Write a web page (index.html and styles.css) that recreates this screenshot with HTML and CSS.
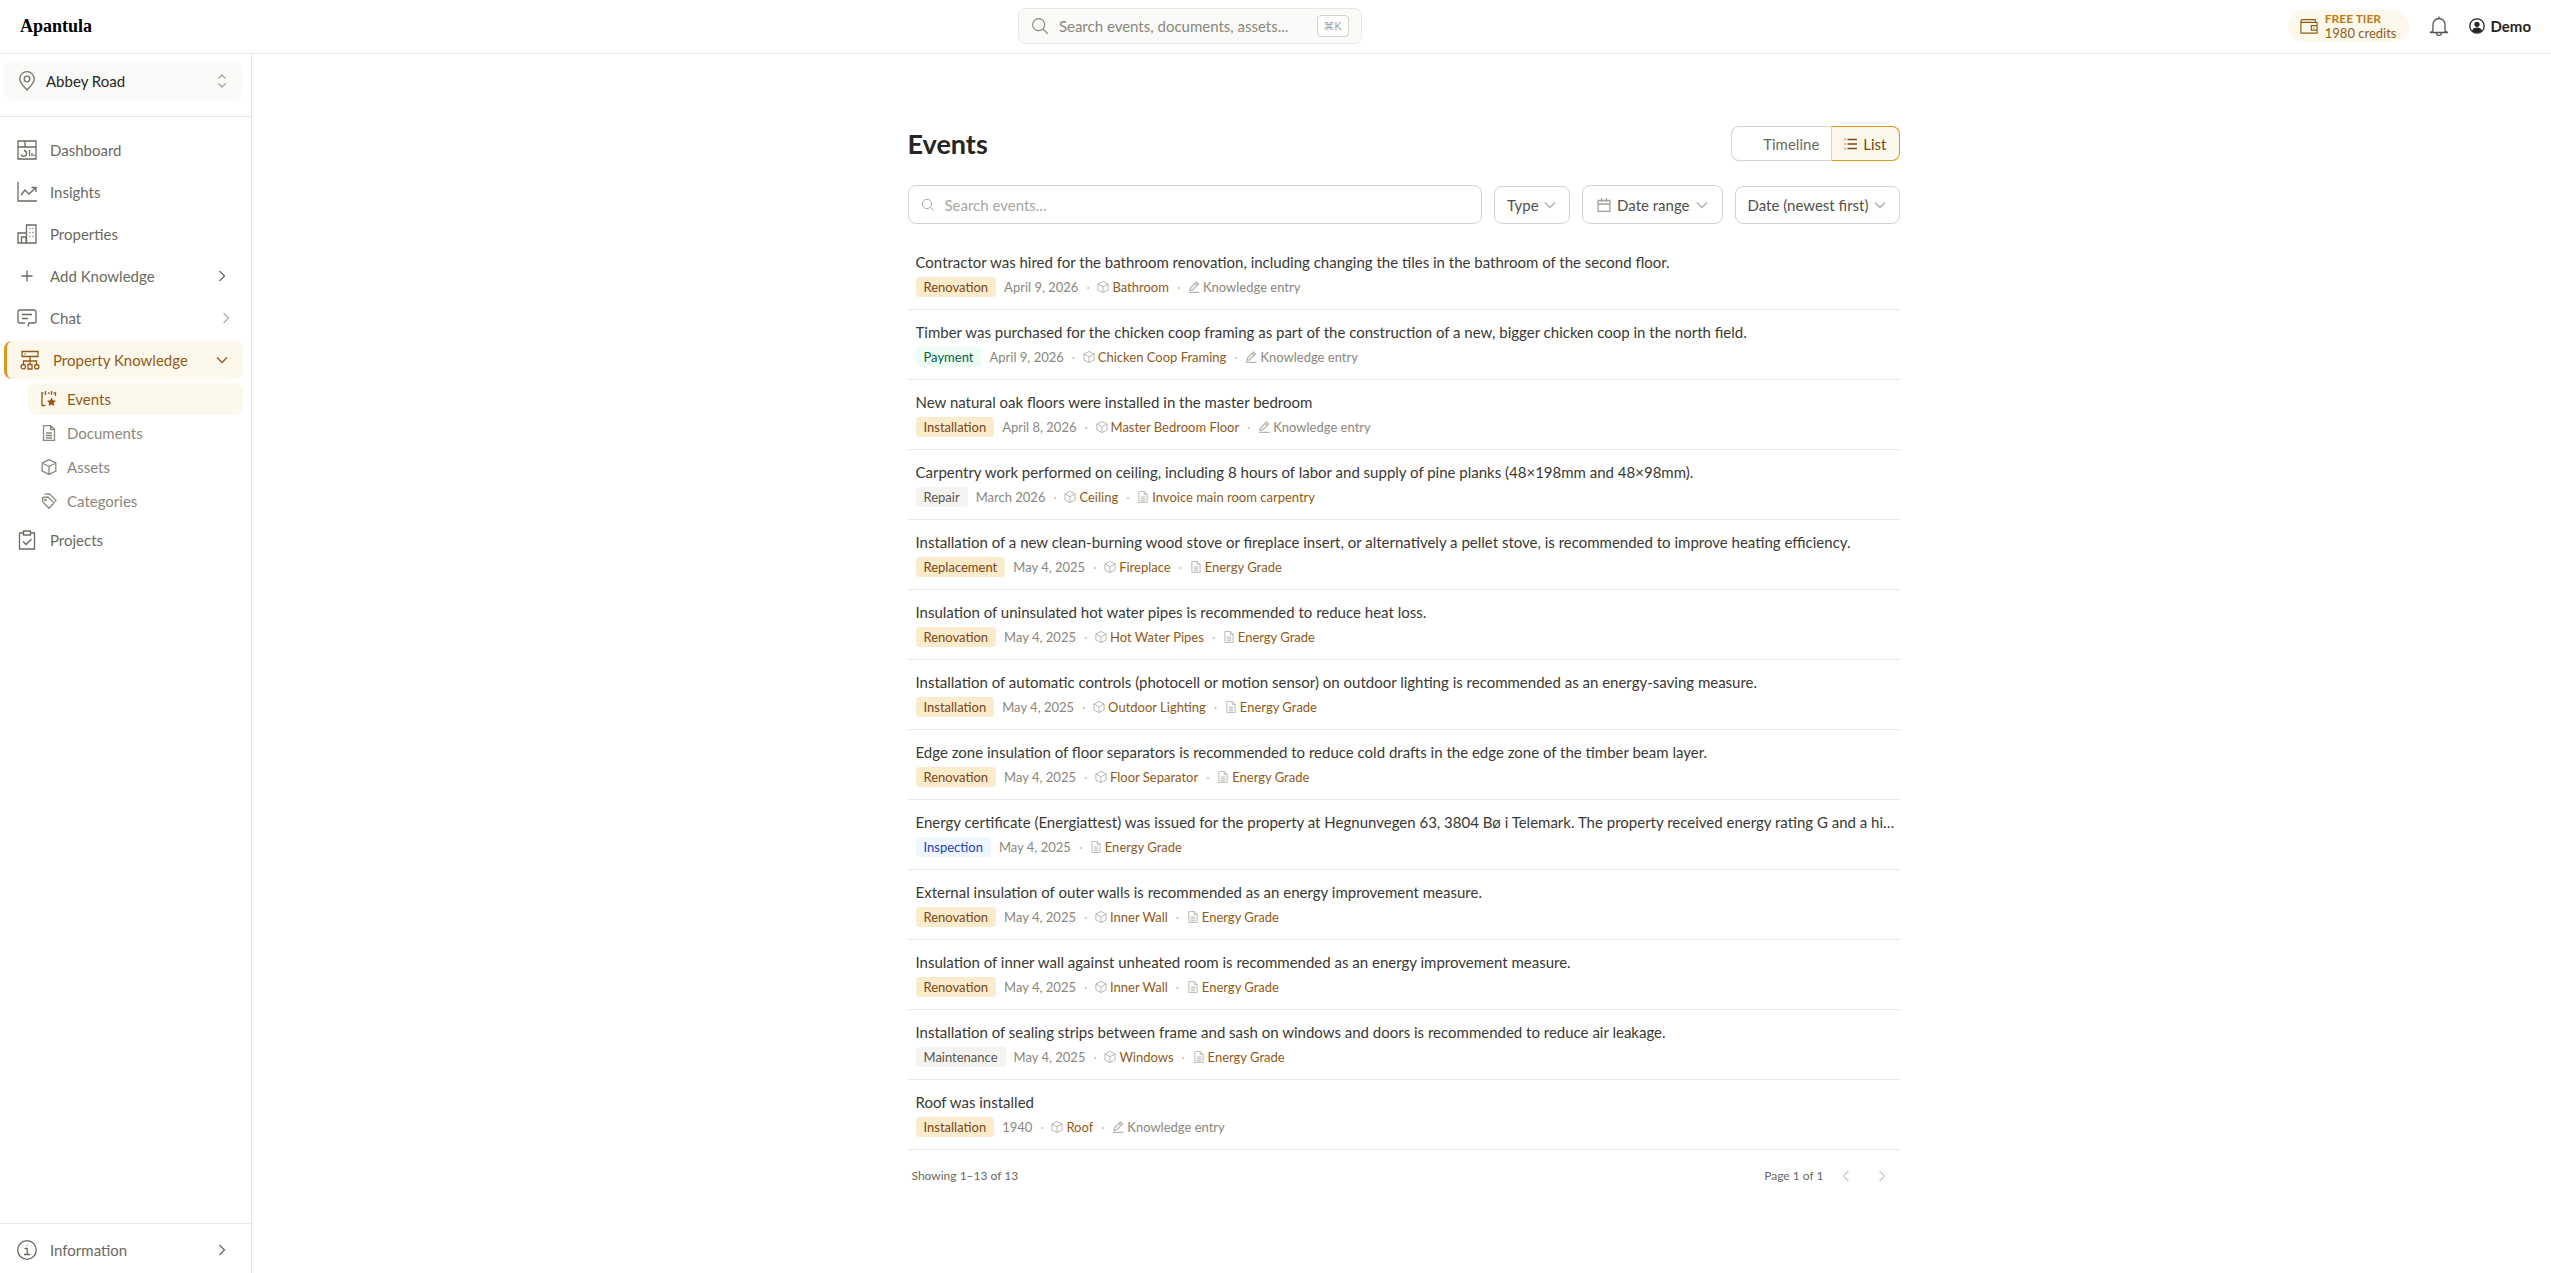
FILE: index.html
```html
<!DOCTYPE html>
<html lang="en">
<head>
  <meta charset="UTF-8">
  <title>Events - Apantula</title>
  <meta name="viewport" content="width=device-width, initial-scale=1.0">
  <link rel="stylesheet" href="styles.css">
</head>
<body>

  <!-- icon sprite -->
  <svg class="sprite" aria-hidden="true">
    <symbol id="i-search" viewBox="0 0 20 20"><circle cx="8.5" cy="8.5" r="6.7"/><path d="M13.3 13.3 18.6 18.6"/></symbol>
    <symbol id="i-pin" viewBox="0 0 20 20"><path d="M10 19C7 15.500 2.700 12 2.700 8a7.300 7.300 0 0 1 14.600 0c0 4-4.300 7.500-7.300 11z"/><circle cx="10" cy="8" r="2.800"/></symbol>
    <symbol id="i-updown" viewBox="0 0 12 16"><path d="M2.500 5.500 6 2l3.500 3.500M2.500 10.500 6 14l3.500-3.500"/></symbol>
    <symbol id="i-dashboard" viewBox="0 0 20 20"><path d="M1 1h18v18H1zM1 7h18M8 1v6M7 10.500a2.900 2.900 0 1 1-3 4M12.500 10v6M15 13v3M17 14.500V16"/></symbol>
    <symbol id="i-insights" viewBox="0 0 20 20"><path d="M1 0v19h19M4 13l4-5 4 4 7-6.500M14.500 5.500H19V10"/></symbol>
    <symbol id="i-buildings" viewBox="0 0 20 20"><path d="M9.500 19V1H19v18H1V9h8.500M4.500 19v-6H9v6M12.500 4.500h1M15.500 4.500h1M12.500 8.500h1M15.500 8.500h1M12.500 12.500h1M15.500 12.500h1"/></symbol>
    <symbol id="i-plus" viewBox="0 0 20 20"><path d="M10 4.500v11M4.500 10h11"/></symbol>
    <symbol id="i-chat" viewBox="0 0 20 20"><path d="M11 18.500 12 15h5a2 2 0 0 0 2-2V4a2 2 0 0 0-2-2H3a2 2 0 0 0-2 2v9a2 2 0 0 0 2 2h5M5 6.500h10M5 10.500h6"/></symbol>
    <symbol id="i-tree" viewBox="0 0 20 20"><path d="M2 1.500h16v5H2zM4.500 4h1M10 6.500v8M3.500 14.500V11h13v3.500M8 14.500h4v4.500H8z"/><circle cx="3.300" cy="16.700" r="2.200"/><circle cx="16.700" cy="16.700" r="2.200"/></symbol>
    <symbol id="i-event" viewBox="0 0 16 16"><path d="M4.500 0v4M10.500 0v4M7 2h1.500M2.500 2H1v12.500h3.500M12.500 2H14.500v3"/><path class="solid" d="m10.500 6.500 1.300 2.800 3.200.4-2.300 2.200.6 3.100-2.800-1.500L7.700 15l.6-3.100L6 9.700l3.200-.4z"/></symbol>
    <symbol id="i-doc" viewBox="0 0 16 16"><path d="M2.500.5h7l4 4v11h-11zM9.500.5v4h4M5 8h6M5 10.500h6M5 13h6"/></symbol>
    <symbol id="i-box" viewBox="0 0 16 16"><path d="M8 .6 14.800 4v8L8 15.400 1.200 12V4zM1.200 4 8 7.500 14.800 4M8 7.500v7.900"/></symbol>
    <symbol id="i-tags" viewBox="0 0 16 16"><path d="M1.500 4.500 7 4l6 6-5 5.300-6-6zM3.500 1.200 8.500.8l6.500 6.700-1 1.500"/><circle cx="4.500" cy="7" r=".7"/></symbol>
    <symbol id="i-clipboard" viewBox="0 0 20 20"><path d="M6.500 3H2.500v16h15V3h-4M6.500 1h7v4h-7zM6 11.500l3 3 5.500-5.500"/></symbol>
    <symbol id="i-info" viewBox="0 0 20 20"><circle cx="10" cy="10" r="9.300"/><path d="M7.500 8.500h2.700v6M7 14.500h6.200M9.500 5.300h1"/></symbol>
    <symbol id="i-wallet" viewBox="0 0 20 20"><path d="M17 6V3H2.500a1.200 1.200 0 0 0 0 3H19v12H1V4M19 9.500h-6.500v5H19zM14.800 12h1"/></symbol>
    <symbol id="i-bell" viewBox="0 0 20 20"><path d="M10 .5v2M4 15V8.500a6 6 0 0 1 12 0V15l3 1.500H1L4 15M7.500 17a2.500 2.500 0 0 0 5 0"/></symbol>
    <symbol id="i-user" viewBox="0 0 16 16"><circle cx="8" cy="8" r="7.200"/><circle class="solid" cx="8" cy="6.300" r="2.600"/><path class="solid" d="M3 13c.5-2.500 2.500-3.500 5-3.500s4.500 1 5 3.500a7 7 0 0 1-10 0z"/></symbol>
    <symbol id="i-list" viewBox="0 0 14 14"><path d="M3.500 2.500H13M3.500 7H13M3.500 11.500H13M.5 2.500h1M.5 7h1M.5 11.500h1"/></symbol>
    <symbol id="i-calendar" viewBox="0 0 14 14"><path d="M1 2.500h12v11H1zM1 6h12M4.500 0v4M9.500 0v4"/></symbol>
    <symbol id="i-pencil" viewBox="0 0 12 12"><path d="M1 11.500h10.500M2 9.500l.5-2.500L8.500 1l2 2-6 6zM7 2.500l2 2"/></symbol>
    <symbol id="i-right" viewBox="0 0 12 12"><path d="m3.500 1 5 5-5 5"/></symbol>
    <symbol id="i-left" viewBox="0 0 12 12"><path d="m8.500 1-5 5 5 5"/></symbol>
    <symbol id="i-down" viewBox="0 0 12 12"><path d="m1 3.500 5 5 5-5"/></symbol>
  </svg>

  <header class="topbar">
    <a class="brand" href="#">Apantula</a>
    <button class="global-search">
      <svg class="icon-md"><use href="#i-search"/></svg>
      <span>Search events, documents, assets...</span>
      <kbd>⌘K</kbd>
    </button>
    <div class="topbar-right">
      <a class="credits" href="#">
        <svg class="icon-md"><use href="#i-wallet"/></svg>
        <span><b>FREE TIER</b>1980 credits</span>
      </a>
      <button class="bell" aria-label="Notifications"><svg class="icon-lg"><use href="#i-bell"/></svg></button>
      <button class="user"><svg class="icon-sm"><use href="#i-user"/></svg>Demo</button>
    </div>
  </header>

  <div class="layout">
    <aside class="sidebar">
      <div class="property">
        <button>
          <svg class="icon-lg"><use href="#i-pin"/></svg>
          <span>Abbey Road</span>
          <svg class="updown"><use href="#i-updown"/></svg>
        </button>
      </div>

      <nav class="nav">
        <a href="#"><svg class="icon-lg"><use href="#i-dashboard"/></svg>Dashboard</a>
        <a href="#"><svg class="icon-lg"><use href="#i-insights"/></svg>Insights</a>
        <a href="#"><svg class="icon-lg"><use href="#i-buildings"/></svg>Properties</a>
        <a href="#"><svg class="icon-lg"><use href="#i-plus"/></svg>Add Knowledge<svg class="chev"><use href="#i-right"/></svg></a>
        <a class="chat" href="#"><svg class="icon-lg"><use href="#i-chat"/></svg>Chat<svg class="chev"><use href="#i-right"/></svg></a>
        <a class="active" href="#"><svg class="icon-lg"><use href="#i-tree"/></svg>Property Knowledge<svg class="chev"><use href="#i-down"/></svg></a>
        <div class="subnav">
          <a class="current" href="#"><svg class="icon-sm"><use href="#i-event"/></svg>Events</a>
          <a href="#"><svg class="icon-sm"><use href="#i-doc"/></svg>Documents</a>
          <a href="#"><svg class="icon-sm"><use href="#i-box"/></svg>Assets</a>
          <a href="#"><svg class="icon-sm"><use href="#i-tags"/></svg>Categories</a>
        </div>
        <a href="#"><svg class="icon-lg"><use href="#i-clipboard"/></svg>Projects</a>
      </nav>

      <div class="nav nav-bottom">
        <a href="#"><svg class="icon-lg"><use href="#i-info"/></svg>Information<svg class="chev"><use href="#i-right"/></svg></a>
      </div>
    </aside>

    <main>
      <div class="content">
        <div class="page-head">
          <h1>Events</h1>
          <div class="toggle">
            <button class="timeline">Timeline</button>
            <button class="selected"><svg class="icon-xs"><use href="#i-list"/></svg>List</button>
          </div>
        </div>

        <div class="filters">
          <label class="search">
            <svg class="icon-xs"><use href="#i-search"/></svg>
            <input type="text" placeholder="Search events..." aria-label="Search events">
          </label>
          <div class="select">
            <select class="select-type" aria-label="Type"><option>Type</option></select>
            <svg class="caret"><use href="#i-down"/></svg>
          </div>
          <button class="date-range">
            <svg class="icon-xs"><use href="#i-calendar"/></svg>Date range<svg class="caret"><use href="#i-down"/></svg>
          </button>
          <div class="select">
            <select class="select-sort" aria-label="Sort"><option>Date (newest first)</option></select>
            <svg class="caret"><use href="#i-down"/></svg>
          </div>
        </div>

        <ul class="events">
          <li>
            <p>Contractor was hired for the bathroom renovation, including changing the tiles in the bathroom of the second floor.</p>
            <div class="meta"><span class="tag amber">Renovation</span><span>April 9, 2026</span><i>·</i><a href="#"><svg><use href="#i-box"/></svg>Bathroom</a><i>·</i><span class="entry"><svg><use href="#i-pencil"/></svg>Knowledge entry</span></div>
          </li>
          <li>
            <p>Timber was purchased for the chicken coop framing as part of the construction of a new, bigger chicken coop in the north field.</p>
            <div class="meta"><span class="tag green">Payment</span><span>April 9, 2026</span><i>·</i><a href="#"><svg><use href="#i-box"/></svg>Chicken Coop Framing</a><i>·</i><span class="entry"><svg><use href="#i-pencil"/></svg>Knowledge entry</span></div>
          </li>
          <li>
            <p>New natural oak floors were installed in the master bedroom</p>
            <div class="meta"><span class="tag amber">Installation</span><span>April 8, 2026</span><i>·</i><a href="#"><svg><use href="#i-box"/></svg>Master Bedroom Floor</a><i>·</i><span class="entry"><svg><use href="#i-pencil"/></svg>Knowledge entry</span></div>
          </li>
          <li>
            <p>Carpentry work performed on ceiling, including 8 hours of labor and supply of pine planks (48×198mm and 48×98mm).</p>
            <div class="meta"><span class="tag">Repair</span><span>March 2026</span><i>·</i><a href="#"><svg><use href="#i-box"/></svg>Ceiling</a><i>·</i><a href="#"><svg><use href="#i-doc"/></svg>Invoice main room carpentry</a></div>
          </li>
          <li>
            <p>Installation of a new clean-burning wood stove or fireplace insert, or alternatively a pellet stove, is recommended to improve heating efficiency.</p>
            <div class="meta"><span class="tag amber">Replacement</span><span>May 4, 2025</span><i>·</i><a href="#"><svg><use href="#i-box"/></svg>Fireplace</a><i>·</i><a href="#"><svg><use href="#i-doc"/></svg>Energy Grade</a></div>
          </li>
          <li>
            <p>Insulation of uninsulated hot water pipes is recommended to reduce heat loss.</p>
            <div class="meta"><span class="tag amber">Renovation</span><span>May 4, 2025</span><i>·</i><a href="#"><svg><use href="#i-box"/></svg>Hot Water Pipes</a><i>·</i><a href="#"><svg><use href="#i-doc"/></svg>Energy Grade</a></div>
          </li>
          <li>
            <p>Installation of automatic controls (photocell or motion sensor) on outdoor lighting is recommended as an energy-saving measure.</p>
            <div class="meta"><span class="tag amber">Installation</span><span>May 4, 2025</span><i>·</i><a href="#"><svg><use href="#i-box"/></svg>Outdoor Lighting</a><i>·</i><a href="#"><svg><use href="#i-doc"/></svg>Energy Grade</a></div>
          </li>
          <li>
            <p>Edge zone insulation of floor separators is recommended to reduce cold drafts in the edge zone of the timber beam layer.</p>
            <div class="meta"><span class="tag amber">Renovation</span><span>May 4, 2025</span><i>·</i><a href="#"><svg><use href="#i-box"/></svg>Floor Separator</a><i>·</i><a href="#"><svg><use href="#i-doc"/></svg>Energy Grade</a></div>
          </li>
          <li>
            <p>Energy certificate (Energiattest) was issued for the property at Hegnunvegen 63, 3804 Bø i Telemark. The property received energy rating G and a hi…</p>
            <div class="meta"><span class="tag blue">Inspection</span><span>May 4, 2025</span><i>·</i><a href="#"><svg><use href="#i-doc"/></svg>Energy Grade</a></div>
          </li>
          <li>
            <p>External insulation of outer walls is recommended as an energy improvement measure.</p>
            <div class="meta"><span class="tag amber">Renovation</span><span>May 4, 2025</span><i>·</i><a href="#"><svg><use href="#i-box"/></svg>Inner Wall</a><i>·</i><a href="#"><svg><use href="#i-doc"/></svg>Energy Grade</a></div>
          </li>
          <li>
            <p>Insulation of inner wall against unheated room is recommended as an energy improvement measure.</p>
            <div class="meta"><span class="tag amber">Renovation</span><span>May 4, 2025</span><i>·</i><a href="#"><svg><use href="#i-box"/></svg>Inner Wall</a><i>·</i><a href="#"><svg><use href="#i-doc"/></svg>Energy Grade</a></div>
          </li>
          <li>
            <p>Installation of sealing strips between frame and sash on windows and doors is recommended to reduce air leakage.</p>
            <div class="meta"><span class="tag">Maintenance</span><span>May 4, 2025</span><i>·</i><a href="#"><svg><use href="#i-box"/></svg>Windows</a><i>·</i><a href="#"><svg><use href="#i-doc"/></svg>Energy Grade</a></div>
          </li>
          <li>
            <p>Roof was installed</p>
            <div class="meta"><span class="tag amber">Installation</span><span>1940</span><i>·</i><a href="#"><svg><use href="#i-box"/></svg>Roof</a><i>·</i><span class="entry"><svg><use href="#i-pencil"/></svg>Knowledge entry</span></div>
          </li>
        </ul>

        <div class="pagination">
          <span>Showing 1–13 of 13</span>
          <div class="pager">
            <span>Page 1 of 1</span>
            <button disabled aria-label="Previous page"><svg class="chev"><use href="#i-left"/></svg></button>
            <button disabled aria-label="Next page"><svg class="chev"><use href="#i-right"/></svg></button>
          </div>
        </div>
      </div>
    </main>
  </div>

</body>
</html>
```
FILE: styles.css
```css
* {
  box-sizing: border-box;
}
body {
  margin: 0;
  min-height: 100vh;
  display: flex;
  flex-direction: column;
  font-family: Lato, sans-serif;
  font-size: 15px;
  line-height: 20px;
  color: #3a3934;
  background: #fff;
}
a {
  color: inherit;
  text-decoration: none;
}
button, input, select {
  font: inherit;
  color: inherit;
  background: none;
  border: none;
  margin: 0;
  padding: 0;
}
button {
  cursor: pointer;
}
svg {
  fill: none;
  stroke: currentColor;
  stroke-width: 1.3;
  flex-shrink: 0;
}
.solid {
  fill: currentColor;
  stroke: none;
}
.sprite {
  position: absolute;
  width: 0;
  height: 0;
}
.icon-lg { width: 20px; height: 20px; }
.icon-md { width: 18px; height: 18px; }
.icon-sm { width: 16px; height: 16px; }
.icon-xs { width: 14px; height: 14px; }
.chev { width: 12px; height: 12px; }
.caret { width: 12px; height: 12px; color: #b0aea6; }
.updown { width: 12px; height: 16px; color: #a3a19a; }

/* top bar */
.topbar {
  height: 54px;
  display: flex;
  align-items: center;
  justify-content: space-between;
  padding: 0 20px 1px;
  border-bottom: 1px solid #e7e6e2;
}
.brand {
  font-family: "Liberation Serif", serif;
  font-size: 18px;
  font-weight: bold;
  color: #000;
}
.global-search {
  display: flex;
  align-items: center;
  gap: 10px;
  width: 344px;
  height: 36px;
  padding: 0 12px;
  background: #fafaf8;
  border: 1px solid #e7e6e2;
  border-radius: 8px;
  color: #8a877c;
}
.global-search kbd {
  margin-left: auto;
  padding: 0 6px;
  background: #fff;
  border: 1px solid #d4d2cb;
  border-radius: 4px;
  font-family: "Liberation Sans", "DejaVu Sans", sans-serif;
  font-size: 11px;
  color: #a3a19a;
}
.topbar-right {
  display: flex;
  align-items: center;
  gap: 20px;
}
.credits {
  display: flex;
  align-items: center;
  gap: 7px;
  padding: 2px 12px;
  background: #fdf8ec;
  border-radius: 16px;
  font-size: 13px;
  line-height: 14px;
  color: #925a17;
}
.credits b {
  display: block;
  font-size: 12px;
  color: #bf7a14;
}
.bell {
  display: flex;
  color: #57554e;
}
.user {
  display: flex;
  align-items: center;
  gap: 6px;
  font-weight: bold;
  color: #262521;
}

/* sidebar */
.layout {
  flex: 1;
  display: flex;
}
.sidebar {
  width: 252px;
  display: flex;
  flex-direction: column;
  border-right: 1px solid #e7e6e2;
}
.property {
  padding: 8px 8px 16px 4px;
  border-bottom: 1px solid #e7e6de;
}
.property button {
  display: flex;
  align-items: center;
  gap: 9px;
  width: 100%;
  height: 38px;
  padding: 0 15px 0 13px;
  background: #fafaf8;
  border-radius: 8px;
  color: #262521;
}
.property .icon-lg {
  color: #76736a;
}
.property .updown {
  margin-left: auto;
}
.nav {
  display: flex;
  flex-direction: column;
  gap: 4px;
  padding: 14px 8px 0 4px;
}
.nav a {
  display: flex;
  align-items: center;
  gap: 13px;
  height: 38px;
  padding: 0 15px 0 13px;
  border-radius: 8px;
  color: #6b6960;
}
.nav .chev {
  margin-left: auto;
}
.nav .chat {
  padding-right: 11px;
}
.chat .chev {
  color: #b0aea6;
}
.nav .active {
  border-left: 3px solid #d9971e;
  background: #fdf8ec;
  color: #925a17;
}
.subnav {
  display: flex;
  flex-direction: column;
  gap: 2px;
  padding-left: 24px;
}
.subnav a {
  gap: 10px;
  height: 32px;
  color: #8a877c;
}
.subnav .current {
  background: #fdf8ec;
  color: #925a17;
}
.nav-bottom {
  margin-top: auto;
  padding: 7px 8px 4px 4px;
  border-top: 1px solid #e7e6e2;
}

/* content */
main {
  flex: 1;
  min-width: 0;
  padding: 72px 20px 32px 24px;
}
.content {
  max-width: 992px;
  margin: 0 auto;
}
.page-head {
  display: flex;
  align-items: center;
  justify-content: space-between;
  margin-bottom: 24px;
}
h1 {
  margin: 0;
  font-size: 27px;
  line-height: 32px;
  color: #262521;
}
.toggle {
  display: flex;
}
.toggle button {
  display: flex;
  align-items: center;
  gap: 5px;
  height: 35px;
  padding: 0 12px;
  border: 1px solid #d4d2cb;
  color: #6b6960;
}
.toggle .timeline {
  padding-left: 31px;
  border-right: none;
  border-radius: 8px 0 0 8px;
}
.toggle .selected {
  border-color: #d9971e;
  border-left-color: #d4d2cb;
  border-radius: 0 8px 8px 0;
  background: #fdf8ec;
  color: #7c4513;
}
.filters {
  display: flex;
  align-items: center;
  gap: 12px;
  margin-bottom: 16px;
}
.search {
  flex: 1;
  display: flex;
  align-items: center;
  gap: 10px;
  height: 39px;
  padding: 0 12px;
  border: 1px solid #d4d2cb;
  border-radius: 8px;
  color: #a3a19a;
}
.search input {
  flex: 1;
  outline: none;
}
.search input::placeholder {
  color: #a9a79f;
}
.select {
  position: relative;
}
.select select, .date-range {
  height: 38px;
  padding: 0 30px 0 12px;
  border: 1px solid #d4d2cb;
  border-radius: 8px;
  appearance: none;
  color: #52504a;
}
.select .caret {
  position: absolute;
  top: 13px;
  right: 14px;
  pointer-events: none;
}
.date-range {
  display: flex;
  align-items: center;
  gap: 6px;
  height: 39px;
  padding: 0 14px;
}
.date-range .icon-xs {
  color: #a3a19a;
}

.events {
  margin: 0;
  padding: 0;
  list-style: none;
}
.events li {
  padding: 12px 4px 12px 8px;
  border-bottom: 1px solid #e7e6e2;
}
.events p {
  margin: 0 0 4px;
  line-height: 21px;
  white-space: nowrap;
  overflow: hidden;
  text-overflow: ellipsis;
}
.meta {
  display: flex;
  align-items: center;
  gap: 8px;
  font-size: 13px;
  line-height: 20px;
  color: #8a877c;
}
.meta i {
  width: 3px;
  text-align: center;
  font-style: normal;
  color: #c4c2ba;
}
.meta a, .entry {
  display: flex;
  align-items: center;
  gap: 3px;
  color: #925a17;
}
.meta .entry {
  color: #8a877c;
}
.meta svg {
  width: 12px;
  height: 12px;
  color: #b8b6ae;
}
.tag {
  padding: 0 8px;
  border-radius: 4px;
  background: #f4f3f0;
  color: #57554e;
}
.amber {
  background: #f9ebcc;
  color: #7c4513;
}
.green {
  background: #ecfdf5;
  color: #065f46;
}
.blue {
  background: #eff6ff;
  color: #1e40af;
}

.pagination {
  display: flex;
  align-items: center;
  justify-content: space-between;
  padding: 12px 4px;
  font-size: 12px;
  color: #6b6960;
}
.pager {
  display: flex;
  align-items: center;
  gap: 8px;
}
.pager button {
  display: flex;
  padding: 8px;
  color: #cfcdc6;
}
```
